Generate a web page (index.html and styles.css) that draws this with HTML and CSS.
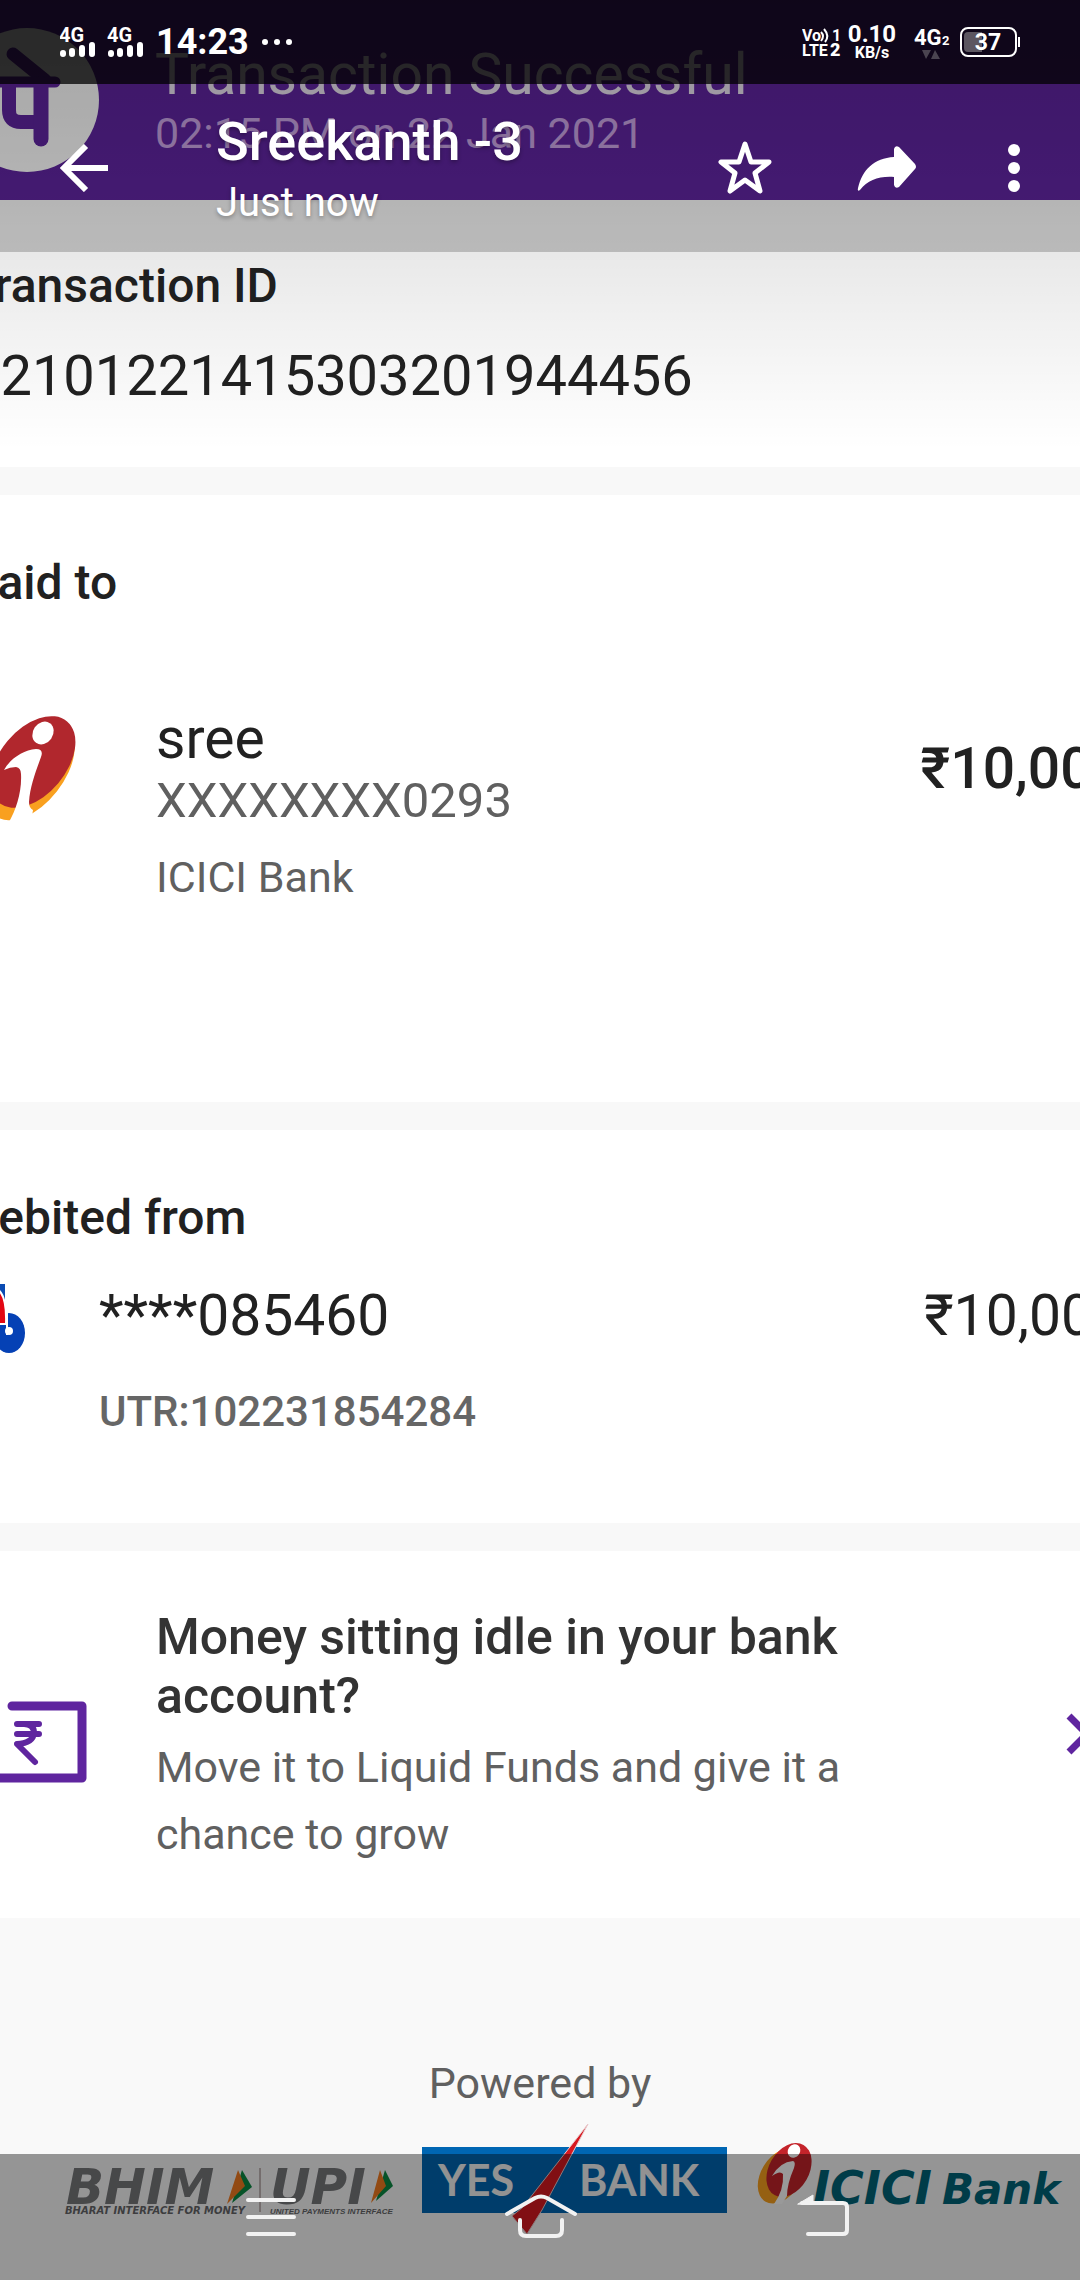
FILE: index.html
```html
<!DOCTYPE html>
<html lang="en">
<head>
<meta charset="utf-8">
<meta name="viewport" content="width=device-width, initial-scale=1">
<title>Sreekanth -3</title>
<link rel="stylesheet" href="styles.css">
</head>
<body>
<main class="viewer">
  <article class="sheet">
    <header class="sheet-head">
      <svg class="app-logo" viewBox="-44 28 144 144" aria-hidden="true">
        <circle cx="28" cy="100" r="72" fill="#fff"/>
        <g fill="none" stroke="#5f259f">
          <path d="M14 54 46 80" stroke-width="13" stroke-linecap="round"/>
          <path d="M-10 82H56" stroke-width="11" stroke-linecap="round"/>
          <path d="M10 84V110Q10 122 22 122H42" stroke-width="14"/>
          <path d="M42 84V139" stroke-width="15" stroke-linecap="round"/>
        </g>
      </svg>
      <div>
        <h1 class="status-title">Transaction Successful</h1>
        <p class="status-date">02:15 PM on 22 Jan 2021</p>
      </div>
    </header>

    <section class="panel panel-id">
      <h2 class="label">Transaction ID</h2>
      <p class="value">T2101221415303201944456</p>
    </section>

    <section class="panel panel-paid">
      <h2 class="label">Paid to</h2>
      <div class="row">
        <svg class="bank-logo" viewBox="0 0 110 108" aria-hidden="true">
          <ellipse cx="64" cy="57" rx="33" ry="57" transform="rotate(38 64 57)" fill="#f9a01f"/>
          <ellipse cx="66" cy="48" rx="33" ry="53" transform="rotate(40 66 48)" fill="#b1272d"/>
          <ellipse cx="76" cy="19" rx="10" ry="12" transform="rotate(35 76 19)" fill="#fff"/>
          <path d="M37 56C43 45 56 36 69 35Q77 35 74 43C69 57 63 72 62 88Q62 94 66 96L64 108H42C49 96 55 78 54 60Q54 54 49 53Q43 53 37 56Z" fill="#fff"/>
        </svg>
        <div class="party">
          <p class="value">sree</p>
          <p class="account">XXXXXXXX0293</p>
          <p class="note">ICICI Bank</p>
        </div>
        <p class="value amount strong">₹10,000</p>
      </div>
    </section>

    <section class="panel panel-debit">
      <h2 class="label">Debited from</h2>
      <div class="row">
        <svg class="debit-logo" viewBox="-33 1283 58 70" aria-hidden="true">
          <path d="M-33 1283H5V1300H-33Z" fill="#0b4bb3"/>
          <ellipse cx="9" cy="1332" rx="16" ry="20" fill="#0541b5"/>
          <path d="M-20 1325V1305Q-12 1286 -3 1288Q7 1294 6 1323H-20Z" fill="#e30613" stroke="#fff" stroke-width="2"/>
          <path d="M7 1308V1334" stroke="#fff" stroke-width="2"/>
          <circle cx="9" cy="1330" r="4" fill="#fff"/>
        </svg>
        <div class="source">
          <p class="value">****085460</p>
          <p class="utr">UTR:102231854284</p>
        </div>
        <p class="value amount">₹10,000</p>
      </div>
    </section>

    <a class="panel promo" href="#liquid-funds">
      <svg class="promo-icon" viewBox="-33 1701 120 82" aria-hidden="true">
        <g fill="none" stroke="#5f259f" stroke-width="9" stroke-linecap="round" stroke-linejoin="round">
          <path d="M12 1706H82V1778H-29"/>
          <path d="M17 1724H39M17 1734H39M17 1724H24Q34 1724 34 1733Q33 1743 17 1744L35 1762" stroke-width="6"/>
        </g>
      </svg>
      <span class="promo-text">
        <strong class="promo-title">Money sitting idle in your bank account?</strong>
        <span class="promo-note">Move it to Liquid Funds and give it a chance to grow</span>
      </span>
      <svg class="chevron" viewBox="0 0 30 44" aria-hidden="true">
        <path d="M4 4 22 22 4 40" fill="none" stroke="#5f259f" stroke-width="7"/>
      </svg>
    </a>

    <footer class="powered">
      <p class="note">Powered by</p>
      <div class="brands">
        <svg class="brand-upi" viewBox="64 2122 332 114" role="img" aria-label="BHIM UPI">
          <g class="upi-letters">
            <text x="66" y="2204">BHIM</text>
            <text x="270" y="2204">UPI</text>
          </g>
          <text class="tag-wide" x="65" y="2214">BHARAT INTERFACE FOR MONEY</text>
          <text class="tag-tight" x="270" y="2214">UNITED PAYMENTS INTERFACE</text>
          <path d="M260 2168V2212" stroke="#8a7474" stroke-width="1"/>
          <g fill="#0b8a43"><path d="M242 2170 252 2187 232 2203Z"/><path d="M385 2170 393 2186 376 2201Z"/></g>
          <g fill="#f47c20"><path d="M238 2170 245 2186 227 2204Z"/><path d="M380 2170 386 2186 371 2203Z"/></g>
        </svg>
        <svg class="brand-yes" viewBox="422 2122 305 114" role="img" aria-label="Yes Bank">
          <path d="M422 2147H727V2213H422Z" fill="#0066b3"/>
          <path d="M588 2124 542 2210 527 2234 512 2216 522 2208Z" fill="#d71920" stroke="#e9c9cb" stroke-width="1"/>
          <g class="yes-letters"><text x="438" y="2196">YES</text><text x="579" y="2196">BANK</text></g>
        </svg>
        <svg class="brand-icici" viewBox="755 2122 310 114" role="img" aria-label="ICICI Bank">
          <ellipse cx="781" cy="2176" rx="20" ry="30" transform="rotate(32 781 2176)" fill="#f9a01f"/>
          <ellipse cx="789" cy="2170" rx="20" ry="29" transform="rotate(30 789 2170)" fill="#c4242b"/>
          <ellipse cx="794" cy="2151" rx="6" ry="7" transform="rotate(35 794 2151)" fill="#fff"/>
          <path d="M772 2176Q780 2162 793 2161Q796 2162 794 2168Q787 2184 787 2196L782 2204H774Q784 2190 783 2174Q780 2170 772 2176Z" fill="#fff"/>
          <g class="icici-letters"><text class="icici-wide" x="813" y="2204">ICICI</text><text x="942" y="2204">Bank</text></g>
        </svg>
      </div>
    </footer>
  </article>

  <div class="shade"></div>

  <div class="statusbar">
    <svg class="signal" viewBox="60 24 84 36" aria-hidden="true">
      <g class="sig-text"><text x="59" y="42">4G</text><text x="107" y="42">4G</text></g>
      <g stroke="#fff" stroke-width="6" stroke-linecap="round">
        <path d="M63 53V54M72 51V54M82 48V54M92 45V54M111 53V54M120 51V54M130 48V54M140 45V54"/>
      </g>
    </svg>
    <time class="clock">14:23</time>
    <svg class="more-dots" viewBox="0 0 32 8" aria-hidden="true"><g fill="#fff"><circle cx="4" cy="4" r="3"/><circle cx="16" cy="4" r="3"/><circle cx="28" cy="4" r="3"/></g></svg>
    <div class="status-right">
      <svg class="volte" viewBox="802 24 40 36" aria-hidden="true">
        <g class="volte-text"><text x="802" y="41">Vo</text><text x="832" y="41">1</text><text x="802" y="56">LTE</text><text class="volte-two" x="830" y="56">2</text></g>
        <path d="M821 32Q825 36 821 41M824 29Q830 36 825 42" fill="none" stroke="#fff" stroke-width="2"/>
      </svg>
      <div class="speed"><span class="speed-value">0.10</span><span class="speed-unit">KB/s</span></div>
      <svg class="network" viewBox="914 22 36 38" aria-hidden="true">
        <text class="net-main" x="914" y="44">4G</text><text class="net-sub" x="942" y="44">2</text>
        <path d="M922 49H931L926 58ZM931 58H940L935 49Z" fill="#4a4450"/>
      </svg>
      <svg class="battery" viewBox="960 26 60 32" role="img" aria-label="Battery 37%">
        <rect x="961" y="28" width="55" height="28" rx="7" fill="none" stroke="#fff" stroke-width="2"/>
        <path d="M982 32H968Q964 32 964 36V48Q964 52 968 52H982Z" fill="#5c5661"/>
        <path d="M1019 37V47" stroke="#fff" stroke-width="2"/>
        <text class="battery-text" x="988" y="50">37</text>
      </svg>
    </div>
  </div>

  <div class="toolbar">
    <button class="icon-button" type="button" aria-label="Back">
      <svg class="ic-back" viewBox="0 0 48 48"><path d="M48 24H4M26 2 4 24 26 46" fill="none" stroke="#fff" stroke-width="6"/></svg>
    </button>
    <div class="caption">
      <p class="caption-title">Sreekanth -3</p>
      <p class="caption-time">Just now</p>
    </div>
    <div class="actions">
      <button class="icon-button" type="button" aria-label="Favourite">
        <svg class="ic-star" viewBox="0 0 74 56"><path d="M29 4 35 22H53L39 33 44 51 29 40 14 51 19 33 5 22H23Z" fill="none" stroke="#fff" stroke-width="5" stroke-linejoin="round"/></svg>
      </button>
      <button class="icon-button" type="button" aria-label="Share">
        <svg class="ic-share" viewBox="0 0 60 48"><path d="M37 5Q38 1 42 3L58 20Q60 23 58 25L42 43Q38 45 37 41V33C22 32 11 36 3 46Q0 48 1 44C5 26 17 14 37 13Z" fill="#fff"/></svg>
      </button>
      <button class="icon-button" type="button" aria-label="More options">
        <svg class="ic-more" viewBox="0 0 60 48"><g fill="#fff"><circle cx="30" cy="6" r="6"/><circle cx="30" cy="24" r="6"/><circle cx="30" cy="42" r="6"/></g></svg>
      </button>
    </div>
  </div>

  <nav class="navbar" aria-label="System navigation">
    <button class="icon-button" type="button" aria-label="Recent apps">
      <svg class="ic-nav" viewBox="230 2193 80 48"><path d="M248 2200H294M248 2217H294M248 2234H294"/></svg>
    </button>
    <button class="icon-button" type="button" aria-label="Home">
      <svg class="ic-nav" viewBox="500 2193 80 48"><path d="M507 2214 535 2198Q541 2195 547 2198L575 2214M520 2220V2230Q520 2236 526 2236H556Q562 2236 562 2230V2220"/></svg>
    </button>
    <button class="icon-button" type="button" aria-label="Go back">
      <svg class="ic-nav" viewBox="770 2193 80 48"><path d="M808 2234H843Q847 2234 847 2230V2207Q847 2203 843 2203H802"/><path class="solid" d="M798 2204 813 2195V2204Z"/></svg>
    </button>
  </nav>
</main>
</body>
</html>
```
FILE: styles.css
```css
* { box-sizing: border-box; }

body {
  margin: 0;
  background: #f9f9f9;
  color: #212121;
  font-family: Roboto, "Noto Sans", sans-serif;
}

h1, h2, p { margin: 0; font-weight: 400; }
svg { display: block; flex: none; }

.viewer {
  position: relative;
  min-height: 100vh;
  overflow: hidden;
}

/* The zoomed picture runs past both edges of the window. */
.sheet { margin: 0 -64px; }

.sheet-head {
  display: flex;
  gap: 56px;
  height: 200px;
  padding: 28px 0 0 19px;
  background: #5f259f;
}
.app-logo { width: 144px; height: 144px; }
.status-title {
  padding-top: 15px;
  font-size: 57px;
  line-height: 64px;
  color: #ece4f2;
}
.status-date {
  font-size: 43px;
  line-height: 52px;
  color: #c9a4e4;
}

.panel {
  padding: 60px 19px 0 31px;
  background: #fff;
  border-bottom: 28px solid #f8f8f8;
}
.panel-id { padding-top: 58px; padding-bottom: 59px; }
.panel-paid { padding-bottom: 199px; }
.panel-debit { padding-bottom: 85px; }

.label { font-size: 48px; line-height: 56px; font-weight: 500; }
.value { font-size: 57px; line-height: 64px; }
.panel-id .value { margin-top: 30px; font-size: 56px; }
.account { font-size: 49px; line-height: 60px; color: #606060; }
.note { font-size: 43px; line-height: 52px; color: #606060; }
.party .note { margin-top: 20px; }
.utr {
  margin-top: 38px;
  font-size: 42px;
  line-height: 52px;
  font-weight: 500;
  color: #666;
}

.row { display: flex; }
.panel-paid .row { margin-top: 96px; gap: 79px; }
.panel-debit .row { margin-top: 38px; gap: 74px; }
.bank-logo { width: 110px; height: 108px; margin-top: 7px; }
.debit-logo { width: 58px; height: 70px; }
.amount { margin-left: auto; }
.strong { margin-top: 30px; font-weight: 500; }

.promo {
  display: flex;
  align-items: center;
  padding: 57px 49px 50px 31px;
  border-bottom: 0;
  color: #333;
  text-decoration: none;
}
.promo-icon { width: 120px; height: 82px; margin-top: 8px; }
.promo-text { width: 720px; margin-left: 69px; }
.promo-title {
  display: block;
  font-size: 50px;
  line-height: 59px;
  font-weight: 500;
}
.promo-note {
  display: block;
  margin-top: 8px;
  font-size: 43px;
  line-height: 67px;
  color: #606060;
}
.chevron { width: 30px; height: 44px; margin: 0 0 8px auto; }

.powered { padding-top: 139px; text-align: center; }
.brands {
  display: flex;
  margin-top: 13px;
  padding-left: 128px;
}
.brand-upi { width: 332px; height: 114px; margin-right: 26px; }
.brand-yes { width: 305px; height: 114px; margin-right: 28px; }
.brand-icici { width: 310px; height: 114px; }
.upi-letters { font: italic 700 50px "DejaVu Sans", sans-serif; fill: #77787b; }
.tag-wide { font: italic 700 10px "DejaVu Sans", sans-serif; fill: #66676a; }
.tag-tight { font: italic 700 8px "Liberation Sans", sans-serif; fill: #66676a; }
.yes-letters { font: 700 43px Lato, sans-serif; fill: #f4f4f4; }
.icici-letters { font: italic 700 42px "DejaVu Sans", sans-serif; fill: #006579; }
.icici-wide { font-size: 46px; }

/* Viewer controls laid over the picture */
.shade {
  position: absolute;
  inset: 0 0 auto;
  height: 450px;
  background: linear-gradient(rgba(0, 0, 0, .2), rgba(0, 0, 0, 0));
}

.statusbar {
  position: absolute;
  inset: 0 0 auto;
  display: flex;
  align-items: center;
  height: 84px;
  padding: 0 60px;
  background: rgba(0, 0, 0, .8);
  color: #fff;
}
.signal { width: 84px; height: 36px; }
.clock { margin-left: 12px; font-size: 36px; line-height: 40px; font-weight: 700; }
.more-dots { width: 32px; height: 8px; margin-left: 12px; }
.status-right { display: flex; align-items: center; margin-left: auto; }
.volte { width: 40px; height: 36px; }
.speed { display: grid; width: 54px; margin: 0 15px 0 3px; text-align: center; }
.speed-value { font-size: 24px; line-height: 22px; font-weight: 700; }
.speed-unit { font-size: 16px; line-height: 16px; font-weight: 700; }
.network { width: 36px; height: 38px; }
.battery { width: 60px; height: 32px; margin-left: 10px; }
.statusbar text { fill: #fff; font-family: Roboto, sans-serif; font-weight: 700; }
.sig-text { font-size: 20px; }
.volte-text { font-size: 16px; }
.statusbar .volte-two { font-size: 18px; font-weight: 900; }
.net-main { font-size: 22px; }
.net-sub { font-size: 13px; }
.battery-text { font-size: 23px; text-anchor: middle; }

.toolbar {
  position: absolute;
  inset: 84px 0 auto;
  display: flex;
  align-items: center;
  height: 168px;
  padding: 0 36px 0 60px;
  background: rgba(0, 0, 0, .2);
  color: #fff;
}
.icon-button {
  display: flex;
  align-items: center;
  justify-content: center;
  padding: 0;
  border: 0;
  background: none;
}
.caption { margin-left: 108px; text-shadow: 0 2px 4px rgba(0, 0, 0, .3); }
.caption-title { font-size: 54px; line-height: 62px; font-weight: 500; }
.caption-time { margin-top: 8px; font-size: 40px; line-height: 44px; }
.actions { display: flex; align-items: center; gap: 67px; margin-left: auto; }
.ic-back { width: 48px; height: 48px; }
.ic-star { width: 74px; height: 56px; }
.ic-share, .ic-more { width: 60px; height: 48px; }

.navbar {
  position: absolute;
  inset: auto 0 0;
  display: grid;
  grid-template-columns: repeat(3, 25%);
  justify-content: center;
  height: 126px;
  background: rgba(0, 0, 0, .4);
}
.ic-nav {
  width: 80px;
  height: 48px;
  fill: none;
  stroke: #f2f2f2;
  stroke-width: 4;
  stroke-linecap: round;
  stroke-linejoin: round;
}
.ic-nav .solid { fill: #f2f2f2; stroke-width: 1; }
```
